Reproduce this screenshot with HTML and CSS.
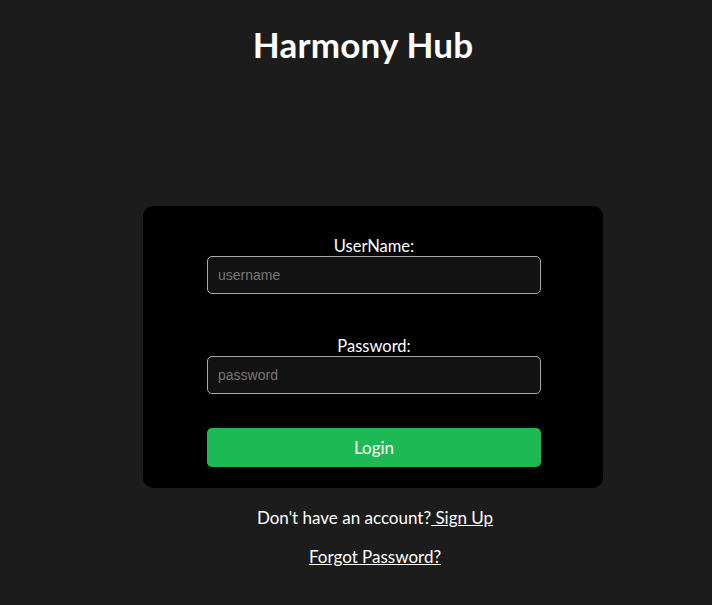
FILE: index.html
```html
<!DOCTYPE html>
<html lang="en">
<head>
<meta charset="utf-8">
<title>Harmony Hub</title>
<link rel="stylesheet" href="styles.css">
</head>
<body>
<header class="top">
  <h1 class="brand">Harmony Hub</h1>
</header>
<main class="wrap">
  <form class="card">
    <label class="field">
      <span class="label">UserName:</span>
      <input class="input" type="text" placeholder="username">
    </label>
    <label class="field field-second">
      <span class="label">Password:</span>
      <input class="input" type="password" placeholder="password">
    </label>
    <button class="btn" type="button">Login</button>
  </form>
  <p class="note">Don't have an account?<a class="link" href="#"> Sign Up</a></p>
  <p class="note note-second"><a class="link" href="#">Forgot Password?</a></p>
</main>
</body>
</html>
```
FILE: styles.css
```css
html, body {
  margin: 0;
  padding: 0;
  background: #1c1c1c;
  color: #ffffff;
  font-family: Lato, "Open Sans", sans-serif;
}
.top {
  width: 440px;
  margin-left: 143px;
  padding-top: 23px;
  height: 183px;
  display: flex;
  justify-content: center;
}
.brand {
  margin: 0;
  font-size: 35px;
  font-weight: 700;
  line-height: 42px;
  letter-spacing: 0.2px;
}
.wrap {
  width: 460px;
  margin-left: 143px;
  display: flex;
  flex-direction: column;
  align-items: center;
}
.card {
  box-sizing: border-box;
  width: 460px;
  height: 282px;
  background: #000000;
  border-radius: 10px;
  padding: 31px 62px 0 64px;
  display: flex;
  flex-direction: column;
}
.field {
  display: flex;
  flex-direction: column;
  align-items: center;
}
.field-second {
  margin-top: 43px;
}
.label {
  font-size: 16.5px;
  line-height: 19px;
  color: #ffffff;
}
.input {
  box-sizing: border-box;
  width: 334px;
  height: 38px;
  background: #121212;
  border: 1px solid #a9a9a9;
  border-radius: 5px;
  padding: 0 10px;
  color: #ffffff;
  font-family: "Liberation Sans", Arial, sans-serif;
  font-size: 14px;
  outline: none;
}
.input::placeholder {
  color: #767676;
}
.btn {
  margin-top: 34px;
  width: 334px;
  height: 39px;
  background: #1db954;
  border: none;
  border-radius: 5px;
  color: #ffffff;
  font-family: Lato, "Open Sans", sans-serif;
  font-size: 17px;
  cursor: pointer;
}
.note {
  margin: 19px 0 0 4px;
  font-size: 17px;
  line-height: 22px;
  color: #ffffff;
}
.note-second {
  margin-top: 17px;
}
.link {
  color: #ffffff;
  text-decoration: underline;
}
```
